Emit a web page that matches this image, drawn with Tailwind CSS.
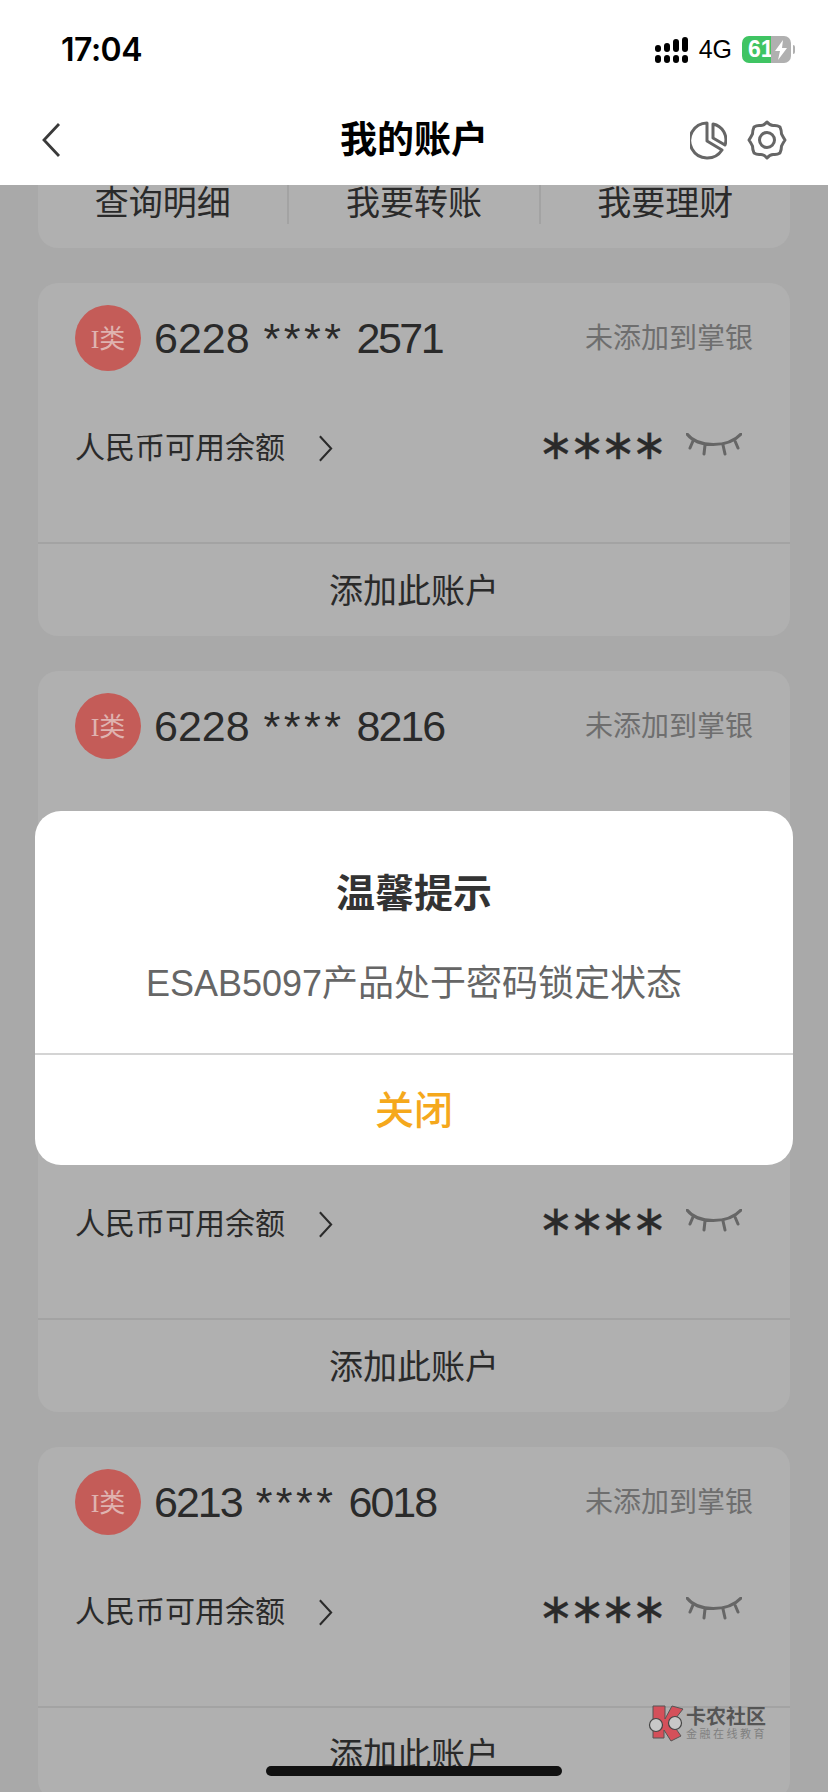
<!DOCTYPE html>
<html lang="zh-CN">
<head>
  <meta charset="UTF-8" />
  <meta name="viewport" content="width=device-width, initial-scale=1.0"/>
  <title>我的账户</title>
  <script src="https://cdn.jsdelivr.net/npm/@tailwindcss/browser@4"></script>
</head>
<body class="bg-[#a9a9a9] font-['Liberation_Sans','Noto_Sans_CJK_SC',sans-serif]">

  <!-- shared icons -->
  <svg class="hidden">
    <symbol id="chevron" viewBox="0 0 16 30"><path d="M2 2 L14 15 L2 28" fill="none" stroke="currentColor" stroke-width="2.2"/></symbol>
    <symbol id="eye" viewBox="0 0 56 24">
      <path d="M1 1 C12 15 42 15 55 1 M7 8 L4 15 M19 12 L18 21 M37 12 L39 21 M49 8 L52 15" fill="none" stroke="currentColor" stroke-width="3" stroke-linecap="round"/>
    </symbol>
  </svg>

  <div class="relative w-[828px] h-[1792px] overflow-hidden flex flex-col">

    <!-- Status bar -->
    <div class="h-[95px] bg-white flex items-center justify-between pl-[61px] pr-[33px] shrink-0">
      <span class="mt-[4px] font-['Inter',sans-serif] text-[32px] font-semibold text-black tracking-[-0.5px]">17:04</span>
      <div class="mt-[4px] flex items-center">
        <svg width="33" height="26" viewBox="0 0 33 26" fill="#000">
          <rect x="0" y="18" width="6" height="8" rx="3"/><rect x="9" y="18" width="6" height="8" rx="3"/><rect x="18" y="18" width="6" height="8" rx="3"/><rect x="27" y="18" width="6" height="8" rx="3"/>
          <rect x="0" y="8" width="6" height="7" rx="3"/><rect x="9" y="6" width="6" height="9" rx="3"/><rect x="18" y="2" width="6" height="13" rx="3"/><rect x="27" y="0" width="6" height="15" rx="3"/>
        </svg>
        <span class="ml-[11px] text-[25px] text-black">4G</span>
        <div class="ml-[10px] w-[49px] h-[27px] rounded-[7px] overflow-hidden flex">
          <div class="w-[29px] bg-[#3fc463] text-white text-[23px] font-bold leading-[27px] pl-[6px] overflow-visible whitespace-nowrap">61</div>
          <div class="flex-1 bg-[#b0b0b0] flex items-center justify-center">
            <svg width="12" height="20" viewBox="0 0 12 20" fill="#fff"><path d="M8 0 L0 11 H5 L3 20 L12 8 H7 Z"/></svg>
          </div>
        </div>
        <div class="ml-[2px] w-[2px] h-[9px] bg-[#b0b0b0] rounded-r-sm"></div>
      </div>
    </div>

    <!-- Nav bar -->
    <div class="h-[90px] bg-white flex items-center justify-between pl-[41px] pr-[41px] shrink-0 relative">
      <svg width="20" height="36" viewBox="0 0 20 36" class="text-[#3a3a3a]"><path d="M18 2 L3 18 L18 34" fill="none" stroke="currentColor" stroke-width="2.8"/></svg>
      <h1 class="absolute inset-x-0 mt-[2px] text-center text-[37px] font-bold text-black">我的账户</h1>
      <div class="flex items-center gap-[20px] text-[#666]">
        <svg width="37" height="39" viewBox="0 0 37 39" fill="none" stroke="currentColor" stroke-width="3" stroke-linejoin="round">
          <path d="M17 2 A17.5 17.5 0 1 0 32 29 L17 20 Z"/>
          <path d="M23 3 A16 16 0 0 1 35 24 L23 17 Z"/>
        </svg>
        <svg width="40" height="40" viewBox="0 0 40 40" fill="none" stroke="currentColor" stroke-width="3" stroke-linejoin="round">
          <path d="M20 2 Q23 5.500 26.100 5.600 Q30 5 33 7 Q34.500 10.500 34.500 13.900 Q36 17 38 20 Q36 23 34.500 26.100 Q34.500 29.500 33 33 Q30 35 26.100 34.400 Q23 34.500 20 38 Q17 34.500 13.900 34.400 Q10 35 7 33 Q5.500 29.500 5.500 26.100 Q4 23 2 20 Q4 17 5.500 13.900 Q5.500 10.500 7 7 Q10 5 13.900 5.600 Q17 5.500 20 2 Z"/>
          <circle cx="20" cy="20" r="7.500"/>
        </svg>
      </div>
    </div>

    <!-- Accounts -->
    <div class="flex flex-col gap-[35px] px-[38px] text-[#2a2a2a]">

      <!-- card scrolled under the header -->
      <div class="h-[63px] bg-[#b0b0b0] rounded-b-[20px] flex shrink-0">
        <div class="flex-1 h-[39px] text-center text-[34px] leading-[36px] border-r-2 border-[#a3a3a3]">查询明细</div>
        <div class="flex-1 h-[39px] text-center text-[34px] leading-[36px] border-r-2 border-[#a3a3a3]">我要转账</div>
        <div class="flex-1 h-[39px] text-center text-[34px] leading-[36px]">我要理财</div>
      </div>

      <div class="h-[353px] bg-[#b0b0b0] rounded-[20px] flex flex-col shrink-0">
        <div class="flex-1 px-[37px] pt-[22px]">
          <div class="h-[66px] flex items-center">
            <div class="w-[66px] h-[66px] rounded-full bg-[#c45c58] text-[#dfb3b0] text-[26px] pt-[2px] flex items-center justify-center font-['Liberation_Serif','Noto_Sans_CJK_SC',serif]">I类</div>
            <span class="ml-[13px] text-[43px] whitespace-nowrap">6228 <span class="tracking-[3.500px] ml-[2px]">****</span> <span class="tracking-[-2.500px]">2571</span></span>
            <span class="ml-auto mt-[2px] text-[28px] text-[#6e6e6e]">未添加到掌银</span>
          </div>
          <div class="h-[40px] mt-[56px] flex items-center">
            <span class="text-[30px]">人民币可用余额</span>
            <svg class="ml-[33px] w-[15px] h-[29px] mt-[2px]"><use href="#chevron"/></svg>
            <span class="ml-auto -mt-[4px] font-['DejaVu_Sans',sans-serif] text-[42px] leading-[40px] tracking-[-4px] [-webkit-text-stroke:0.3px_#2a2a2a]">∗∗∗∗</span>
            <svg class="ml-[23px] mr-[11px] w-[56px] h-[24px] -mt-[5px] text-[#666]"><use href="#eye"/></svg>
          </div>
        </div>
        <div class="h-[94px] pt-[2px] border-t-2 border-[#a3a3a3] flex items-center justify-center text-[34px]">添加此账户</div>
      </div>

      <!-- lower part of this card sits behind the dialog -->
      <div class="h-[353px] bg-[#b0b0b0] rounded-[20px] flex flex-col shrink-0">
        <div class="flex-1 px-[37px] pt-[22px]">
          <div class="h-[66px] flex items-center">
            <div class="w-[66px] h-[66px] rounded-full bg-[#c45c58] text-[#dfb3b0] text-[26px] pt-[2px] flex items-center justify-center font-['Liberation_Serif','Noto_Sans_CJK_SC',serif]">I类</div>
            <span class="ml-[13px] text-[43px] whitespace-nowrap">6228 <span class="tracking-[3.500px] ml-[2px]">****</span> <span class="tracking-[-2px]">8216</span></span>
            <span class="ml-auto mt-[2px] text-[28px] text-[#6e6e6e]">未添加到掌银</span>
          </div>
        </div>
      </div>

      <!-- upper part of this card sits behind the dialog -->
      <div class="h-[353px] bg-[#b0b0b0] rounded-[20px] flex flex-col shrink-0">
        <div class="flex-1 px-[37px] pt-[144px]">
          <div class="h-[40px] flex items-center">
            <span class="text-[30px]">人民币可用余额</span>
            <svg class="ml-[33px] w-[15px] h-[29px] mt-[2px]"><use href="#chevron"/></svg>
            <span class="ml-auto -mt-[4px] font-['DejaVu_Sans',sans-serif] text-[42px] leading-[40px] tracking-[-4px] [-webkit-text-stroke:0.3px_#2a2a2a]">∗∗∗∗</span>
            <svg class="ml-[23px] mr-[11px] w-[56px] h-[24px] -mt-[5px] text-[#666]"><use href="#eye"/></svg>
          </div>
        </div>
        <div class="h-[94px] pt-[2px] border-t-2 border-[#a3a3a3] flex items-center justify-center text-[34px]">添加此账户</div>
      </div>

      <div class="h-[353px] bg-[#b0b0b0] rounded-[20px] flex flex-col shrink-0">
        <div class="flex-1 px-[37px] pt-[22px]">
          <div class="h-[66px] flex items-center">
            <div class="w-[66px] h-[66px] rounded-full bg-[#c45c58] text-[#dfb3b0] text-[26px] pt-[2px] flex items-center justify-center font-['Liberation_Serif','Noto_Sans_CJK_SC',serif]">I类</div>
            <span class="ml-[13px] text-[43px] whitespace-nowrap"><span class="tracking-[-2px]">6213</span> <span class="tracking-[3.500px] ml-[2px]">****</span> <span class="tracking-[-2px]">6018</span></span>
            <span class="ml-auto mt-[2px] text-[28px] text-[#6e6e6e]">未添加到掌银</span>
          </div>
          <div class="h-[40px] mt-[56px] flex items-center">
            <span class="text-[30px]">人民币可用余额</span>
            <svg class="ml-[33px] w-[15px] h-[29px] mt-[2px]"><use href="#chevron"/></svg>
            <span class="ml-auto -mt-[4px] font-['DejaVu_Sans',sans-serif] text-[42px] leading-[40px] tracking-[-4px] [-webkit-text-stroke:0.3px_#2a2a2a]">∗∗∗∗</span>
            <svg class="ml-[23px] mr-[11px] w-[56px] h-[24px] -mt-[5px] text-[#666]"><use href="#eye"/></svg>
          </div>
        </div>
        <div class="h-[94px] pt-[2px] border-t-2 border-[#a3a3a3] flex items-center justify-center text-[34px]">添加此账户</div>
      </div>
    </div>

    <!-- Dialog -->
    <div class="absolute left-[35px] top-[811px] w-[758px] h-[354px] bg-white rounded-[26px] flex flex-col">
      <div class="h-[242px] shrink-0 flex flex-col items-center">
        <h2 class="mt-[54px] text-[39px] font-bold text-[#333]">温馨提示</h2>
        <p class="mt-[33px] text-[36px] text-[#666]">ESAB5097产品处于密码锁定状态</p>
      </div>
      <button class="flex-1 pt-[3px] border-t-2 border-[#d4d4d4] text-[39px] font-medium text-[#f5a81c]">关闭</button>
    </div>

    <!-- Watermark -->
    <div class="absolute left-[648px] top-[1705px] flex items-center">
      <svg width="36" height="37" viewBox="0 0 36 37">
        <path d="M5 1 H17 V14 L24 1 L35 4 L24 18 L33 31 L23 36 L16 25 V33 H5 Z" fill="#d4505a" stroke="#555" stroke-width="1"/>
        <circle cx="8" cy="20" r="6.500" fill="#c8c8c8" stroke="#444" stroke-width="1.200"/>
        <circle cx="27" cy="18" r="6.500" fill="#c8c8c8" stroke="#444" stroke-width="1.200"/>
      </svg>
      <div class="ml-[2px] flex flex-col">
        <span class="text-[20px] leading-[21px] font-bold text-[#555]">卡农社区</span>
        <span class="text-[11px] leading-[13px] tracking-[2.500px] text-[#808080] whitespace-nowrap">金融在线教育</span>
      </div>
    </div>

    <!-- Home indicator -->
    <div class="absolute left-[266px] top-[1766px] w-[296px] h-[10px] rounded-full bg-[#111]"></div>
  </div>
</body>
</html>
